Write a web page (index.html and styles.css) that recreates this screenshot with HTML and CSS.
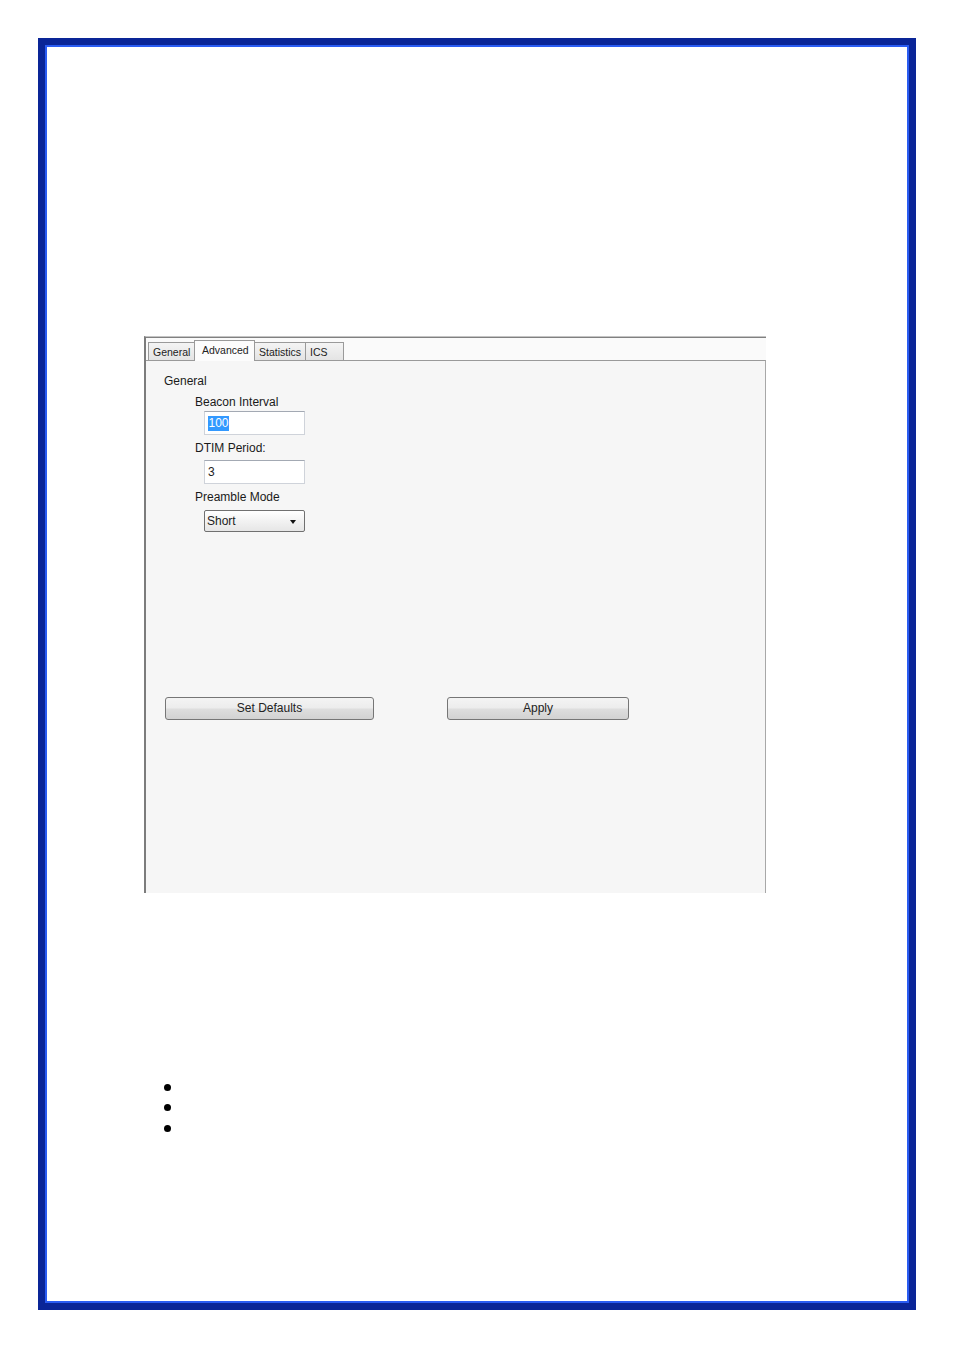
FILE: index.html
```html
<!DOCTYPE html>
<html>
<head>
<meta charset="utf-8">
<link rel="stylesheet" href="styles.css">
</head>
<body>
<div class="page">
  <div class="dialog">
    <div class="tabstrip">
      <div class="tab t-general">General</div>
      <div class="tab tab-active t-advanced">Advanced</div>
      <div class="tab t-stats">Statistics</div>
      <div class="tab t-ics">ICS</div>
      <div class="tab-fill"></div>
    </div>
    <div class="panel">
      <div class="group-title">General</div>
      <div class="fields">
        <div class="label l1">Beacon Interval</div>
        <div class="textbox tb1"><span class="sel">100</span></div>
        <div class="label l2">DTIM Period:</div>
        <div class="textbox tb2"><span class="val">3</span></div>
        <div class="label l3">Preamble Mode</div>
        <div class="select"><span class="val">Short</span><span class="arrow"></span></div>
      </div>
      <div class="buttons">
        <div class="btn btn-defaults">Set Defaults</div>
        <div class="btn btn-apply">Apply</div>
      </div>
    </div>
  </div>
  <div class="bullets">
    <div class="bullet-item"><span class="dot"></span></div>
    <div class="bullet-item"><span class="dot"></span></div>
    <div class="bullet-item"><span class="dot"></span></div>
  </div>
</div>
</body>
</html>
```

FILE: styles.css
```css
html, body {
  margin: 0;
  padding: 0;
  background: #ffffff;
}
body {
  font-family: "Liberation Sans", Arial, sans-serif;
  color: #1a1a1a;
}
.page {
  margin: 38px 0 0 38px;
  width: 878px;
  height: 1272px;
  box-sizing: border-box;
  border: 7px solid #0a2597;
  box-shadow: inset 0 0 0 2px #2a5cf2;
  padding: 291px 0 0 99px;
}
.dialog {
  width: 622px;
  box-sizing: border-box;
  border-top: 1px solid #c4c4c4;
  border-left: 2px solid #7c7c7c;
  position: relative;
}
.dialog::before {
  content: "";
  display: block;
  height: 1px;
  background: #808080;
}
.tabstrip {
  display: flex;
  align-items: flex-end;
  height: 22px;
  padding-left: 2px;
  background: #fafafa;
  box-sizing: border-box;
}
.tab {
  height: 18px;
  box-sizing: border-box;
  border: 1px solid #9a9a9a;
  border-bottom: none;
  border-right: none;
  background: linear-gradient(#f4f4f4, #e4e4e4);
  font-size: 10.5px;
  line-height: 18px;
  padding: 0 4px;
  color: #222;
}
.t-general { width: 46px; }
.t-advanced { width: 61px; }
.t-stats { width: 51px; }
.t-ics { width: 39px; border-right: 1px solid #9a9a9a; }
.tab-active {
  height: 21px;
  line-height: 19px;
  background: #fcfcfc;
  padding-left: 7px;
  margin-bottom: -1px;
  position: relative;
  z-index: 1;
  border-right: 1px solid #9a9a9a;
  margin-right: -1px;
}
.tab-fill {
  flex: 1;
}
.panel {
  height: 533px;
  box-sizing: border-box;
  border-top: 1px solid #9a9a9a;
  border-right: 1px solid #a8a8a8;
  background: #f6f6f6;
  padding: 13px 0 0 18px;
  font-size: 12px;
  line-height: 15px;
}
.fields {
  margin-left: 31px;
}
.label.l1 { margin-top: 6px; }
.label.l2 { margin-top: 6px; }
.label.l3 { margin-top: 6px; }
.textbox {
  margin: 1px 0 0 9px;
  width: 101px;
  height: 24px;
  box-sizing: border-box;
  background: #ffffff;
  border: 1px solid #cfd3da;
  border-top-color: #a3a9b3;
  display: flex;
  align-items: center;
  padding-left: 3px;
}
.tb2 { margin-top: 4px; }
.sel {
  background: #3399ff;
  color: #ffffff;
  line-height: 15px;
  padding: 0 0.5px;
}
.val {
  color: #222;
}
.select {
  margin: 5px 0 0 9px;
  width: 101px;
  height: 22px;
  box-sizing: border-box;
  border: 1px solid #707070;
  border-radius: 2px;
  background: linear-gradient(#ffffff, #f2f2f2 50%, #e6e6e6);
  display: flex;
  align-items: center;
  justify-content: space-between;
  padding: 0 8px 0 2px;
}
.arrow {
  width: 0;
  height: 0;
  border-left: 3.5px solid transparent;
  border-right: 3.5px solid transparent;
  border-top: 4px solid #111;
  margin-top: 1px;
}
.buttons {
  display: flex;
  gap: 73px;
  margin: 165px 0 0 1px;
}
.btn {
  height: 23px;
  box-sizing: border-box;
  border: 1px solid #767676;
  border-radius: 3px;
  background: linear-gradient(#f4f4f4 0%, #ececec 48%, #dedede 52%, #d2d2d2 100%);
  text-align: center;
  line-height: 21px;
  font-size: 12px;
  color: #222;
}
.btn-defaults { width: 209px; }
.btn-apply { width: 182px; }
.bullets {
  margin: 184px 0 0 20px;
  display: flex;
  flex-direction: column;
}
.bullet-item {
  height: 20.5px;
  display: flex;
  align-items: center;
}
.dot {
  width: 7px;
  height: 7px;
  border-radius: 50%;
  background: #000;
}
```
